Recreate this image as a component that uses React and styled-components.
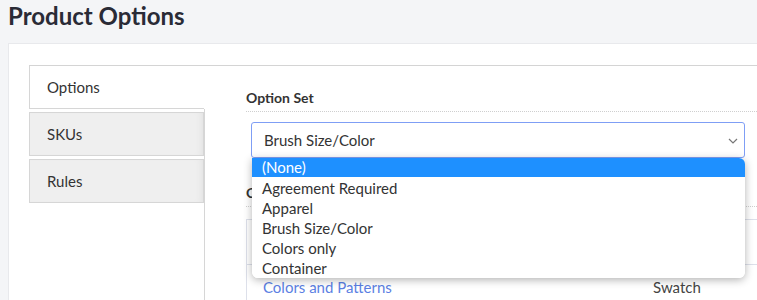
import React from 'react';
import styled, { createGlobalStyle } from 'styled-components';

const GlobalStyle = createGlobalStyle`
  body {
    margin: 0;
    background: #f4f5f7;
    font-family: 'Source Sans Pro', 'Lato', 'Liberation Sans', sans-serif;
    color: #333333;
    overflow: hidden;
  }
`;

const tabs = ['Options', 'SKUs', 'Rules'];
const optionSets = [
  '(None)',
  'Agreement Required',
  'Apparel',
  'Brush Size/Color',
  'Colors only',
  'Container',
];

function Chevron() {
  return (
    <ChevronIcon width="10" height="6" viewBox="0 0 10 6">
      <polyline points="1,1 5,5 9,1" fill="none" stroke="#777" strokeWidth="1.2" />
    </ChevronIcon>
  );
}

function App() {
  return (
    <Page>
      <GlobalStyle />
      <Title>Product Options</Title>
      <Panel>
        <TabBox>
          <TabList>
            {tabs.map((tab, i) => (
              <Tab key={tab} $active={i === 0}>
                {tab}
              </Tab>
            ))}
          </TabList>
          <Content>
            <SectionLabel>Option Set</SectionLabel>
            <SelectWrap>
              <Select>
                <span>Brush Size/Color</span>
                <Chevron />
              </Select>
              <Dropdown role="listbox">
                {optionSets.map((item, i) => (
                  <DropItem key={item} $selected={i === 0}>
                    {item}
                  </DropItem>
                ))}
              </Dropdown>
            </SelectWrap>
            <SectionLabel $second>C</SectionLabel>
            <Table>
              <HeadRow />
              <Row>
                <LinkText>Colors and Patterns</LinkText>
                <span>Swatch</span>
              </Row>
            </Table>
          </Content>
        </TabBox>
      </Panel>
    </Page>
  );
}

const Page = styled.div`
  padding-left: 8px;
  height: 300px;
`;

const Title = styled.h1`
  margin: 0;
  height: 43px;
  padding-top: 1px;
  box-sizing: border-box;
  font-size: 24px;
  font-weight: 700;
  line-height: 30px;
  color: #2a2b36;
`;

const Panel = styled.div`
  width: 800px;
  height: 300px;
  background: #ffffff;
  border: 1px solid #e8e9ec;
  padding: 21px 0 0 20px;
  box-sizing: border-box;
`;

const TabBox = styled.div`
  display: flex;
  border-top: 1px solid #d4d4d4;
  height: 260px;
`;

const TabList = styled.div`
  display: flex;
  flex-direction: column;
  width: 175px;
  gap: 3px;
`;

const Tab = styled.div`
  height: ${p => (p.$active ? '43px' : '44px')};
  box-sizing: border-box;
  display: flex;
  align-items: center;
  padding-left: 17px;
  font-size: 15px;
  color: #333333;
  background: ${p => (p.$active ? '#ffffff' : '#efefef')};
  border: 1px solid #d6d6d6;
  border-top: ${p => (p.$active ? 'none' : '1px solid #d6d6d6')};
  border-right: ${p => (p.$active ? 'none' : '1px solid #d6d6d6')};
  box-shadow: ${p => (p.$active ? 'none' : 'inset -6px 0 8px -6px rgba(0,0,0,0.08)')};
`;

const Content = styled.div`
  flex: 1;
  padding: 24px 0 0 42px;
  background: linear-gradient(#d6d6d6, #d6d6d6) 0 43px / 1px 100% no-repeat;
`;

const SectionLabel = styled.div`
  font-size: 14px;
  font-weight: 700;
  color: #333333;
  line-height: 16px;
  padding-bottom: 5px;
  border-bottom: 1px dotted #cfcfcf;
  margin-top: ${p => (p.$second ? '27px' : '0')};
`;

const SelectWrap = styled.div`
  position: relative;
  margin: 10px 0 0 5px;
  width: 494px;
`;

const Select = styled.div`
  height: 36px;
  box-sizing: border-box;
  border: 1px solid #7f9ef5;
  border-radius: 3px;
  display: flex;
  align-items: center;
  justify-content: space-between;
  padding: 0 6px 0 12px;
  font-size: 15px;
  color: #333333;
  background: #ffffff;
`;

const ChevronIcon = styled.svg`
  margin-top: 2px;
`;

const Dropdown = styled.div`
  position: absolute;
  top: 36px;
  left: 1px;
  right: 0;
  z-index: 2;
  background: #ffffff;
  border-radius: 0 6px 6px 6px;
  box-shadow: 0 2px 8px rgba(0, 0, 0, 0.3);
  overflow: hidden;
`;

const DropItem = styled.div`
  height: 20px;
  line-height: 21px;
  padding-left: 10px;
  font-size: 15px;
  color: ${p => (p.$selected ? '#ffffff' : '#333333')};
  background: ${p => (p.$selected ? '#1e90ff' : '#ffffff')};
  &:first-child {
    height: 19px;
    line-height: 19px;
    margin-bottom: 1px;
  }
`;

const Table = styled.div`
  margin-top: 12px;
  border: 1px solid #dde0ea;
  width: 540px;
`;

const HeadRow = styled.div`
  height: 44px;
  border-bottom: 1px solid #dde0ea;
`;

const Row = styled.div`
  display: grid;
  grid-template-columns: 390px 1fr;
  height: 44px;
  align-items: center;
  padding-left: 16px;
  font-size: 15px;
  color: #444444;
`;

const LinkText = styled.span`
  color: #5b7fe3;
`;

export default App;
